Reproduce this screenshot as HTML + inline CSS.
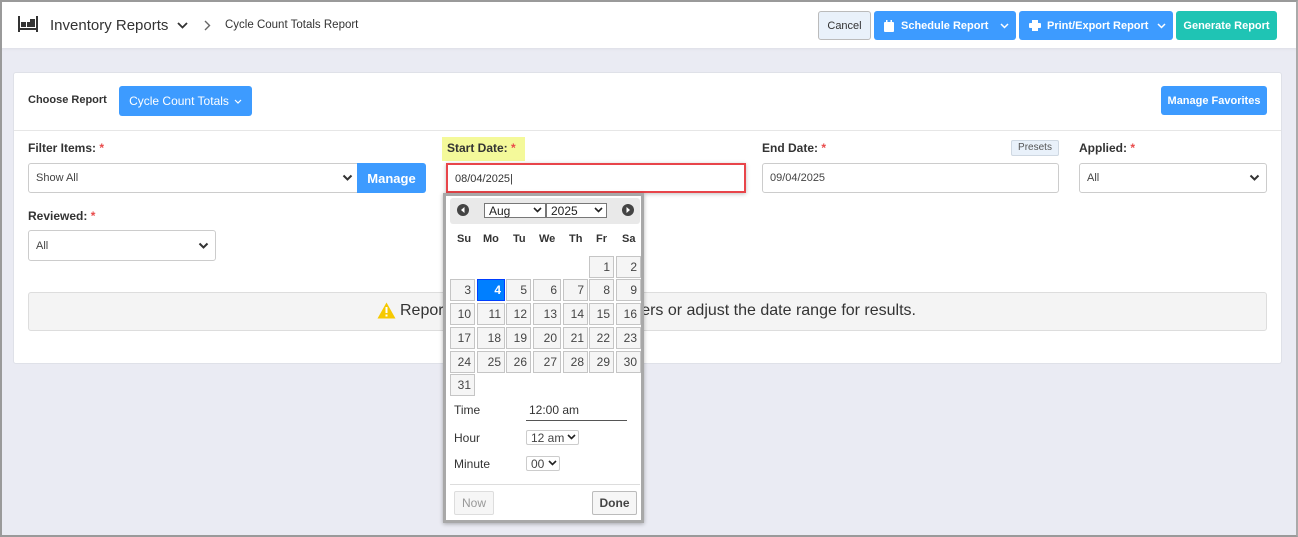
<!DOCTYPE html>
<html><head><style>
*{box-sizing:border-box;margin:0;padding:0}
body{width:1298px;height:537px;overflow:hidden;font-family:"Liberation Sans",Arial,sans-serif;background:#eaebf3;position:relative;color:#333}
div{white-space:nowrap}
.frame{position:absolute;inset:0;border:2px solid #9a9a9a;border-right-color:#aaa;pointer-events:none;z-index:50}
.hdr{position:absolute;left:0;top:0;width:1298px;height:48px;background:#fff;box-shadow:0 1px 3px rgba(0,0,0,.06)}
.abs{position:absolute}
.btn{position:absolute;border-radius:3px;color:#fff;font-size:11px;font-weight:bold;display:flex;align-items:center;justify-content:center}
.blue{background:#3d9bff}
.card{position:absolute;left:13px;top:72px;width:1269px;height:292px;background:#fff;border:1px solid #dfe1e8;border-radius:3px}
.lbl{position:absolute;font-size:12px;font-weight:bold;color:#333}
.req{color:#e94b4b}
.sel{position:absolute;border:1px solid #ccc;border-radius:3px;background:#fff;font-size:11px;color:#444;padding-left:7px;display:flex;align-items:center}
.chev{position:absolute;right:6px;top:50%;margin-top:-4px}
.cell{position:absolute;background:#f5f5f5;border:1px solid #c5c5c5;font-size:12px;color:#454545;text-align:right;padding-right:3px;line-height:20px;height:22px}
.dh{position:absolute;font-size:11px;font-weight:bold;color:#333;top:233px}
</style></head><body>
<div class="hdr">
 <svg class="abs" style="left:18px;top:16px" width="20" height="16" viewBox="0 0 20 16"><rect x="0" y="0" width="2" height="16" fill="#333"/><rect x="18" y="0" width="2" height="16" fill="#333"/><rect x="0" y="12" width="20" height="2" fill="#333"/><rect x="3" y="6" width="5" height="5" fill="#333"/><rect x="9" y="6" width="3" height="5" fill="#333"/><rect x="12" y="3" width="5" height="8" fill="#333"/></svg>
 <div class="abs" style="left:50px;top:17px;font-size:15px;color:#333">Inventory Reports</div>
 <svg class="abs" style="left:177px;top:22px" width="11" height="7" viewBox="0 0 11 7"><path d="M1 1l4.5 4.5L10 1" stroke="#333" stroke-width="1.8" fill="none"/></svg>
 <svg class="abs" style="left:204px;top:20px" width="7" height="11" viewBox="0 0 7 11"><path d="M1 1l4.5 4.5L1 10" stroke="#666" stroke-width="1.4" fill="none"/></svg>
 <div class="abs" style="left:225px;top:19px;font-size:11.5px;color:#333">Cycle Count Totals Report</div>
 <div class="btn" style="left:818px;top:11px;width:53px;height:29px;background:#e9f1fa;border:1px solid #bbb;color:#333;font-weight:normal">Cancel</div>
 <div class="btn blue" style="left:874px;top:11px;width:142px;height:29px;justify-content:flex-start;padding-left:10px">
  <svg width="10" height="12" viewBox="0 0 10 12" style="margin-right:7px"><rect x="0" y="2" width="10" height="10" rx="1" fill="#fff"/><rect x="2" y="0" width="1.5" height="3" fill="#fff"/><rect x="6.5" y="0" width="1.5" height="3" fill="#fff"/></svg>Schedule Report
  <svg class="abs" style="left:126px;top:12px" width="9" height="6" viewBox="0 0 9 6"><path d="M1 1l3.5 3.5L8 1" stroke="#fff" stroke-width="1.5" fill="none"/></svg></div>
 <div class="btn blue" style="left:1019px;top:11px;width:154px;height:29px;justify-content:flex-start;padding-left:10px">
  <svg width="12" height="11" viewBox="0 0 12 11" style="margin-right:6px"><rect x="3" y="0" width="6" height="3" fill="#fff"/><rect x="0" y="3" width="12" height="5" rx="1" fill="#fff"/><rect x="3" y="7" width="6" height="4" fill="#fff"/></svg>Print/Export Report
  <svg class="abs" style="left:138px;top:12px" width="9" height="6" viewBox="0 0 9 6"><path d="M1 1l3.5 3.5L8 1" stroke="#fff" stroke-width="1.5" fill="none"/></svg></div>
 <div class="btn" style="left:1176px;top:11px;width:101px;height:29px;background:#1fc4b4">Generate Report</div>
</div>

<div class="card">
 <div class="lbl" style="left:14px;top:21px;font-size:11px">Choose Report</div>
 <div class="btn blue" style="left:105px;top:13px;width:133px;height:30px;font-weight:normal;font-size:12px">Cycle Count Totals
  <svg width="8" height="5" viewBox="0 0 8 5" style="margin-left:5px"><path d="M1 1l3 3 3-3" stroke="#fff" stroke-width="1.2" fill="none"/></svg></div>
 <div class="btn blue" style="left:1147px;top:13px;width:106px;height:29px;font-size:11px">Manage Favorites</div>
 <div class="abs" style="left:0;top:57px;width:1267px;height:1px;background:#e6e6e6"></div>
</div>

<div class="lbl" style="left:28px;top:141px">Filter Items: <span class="req">*</span></div>
<div class="sel" style="left:28px;top:163px;width:332px;height:30px">Show All<svg class="chev" width="11" height="8" viewBox="0 0 11 8"><path d="M1.5 1.5l4 4 4-4" stroke="#333" stroke-width="2" fill="none"/></svg></div>
<div class="btn blue" style="left:357px;top:163px;width:69px;height:30px;font-size:13px;border-radius:0 3px 3px 0">Manage</div>

<div class="lbl" style="left:28px;top:209px">Reviewed: <span class="req">*</span></div>
<div class="sel" style="left:28px;top:230px;width:188px;height:31px">All<svg class="chev" width="11" height="8" viewBox="0 0 11 8"><path d="M1.5 1.5l4 4 4-4" stroke="#333" stroke-width="2" fill="none"/></svg></div>

<div class="abs" style="left:442px;top:137px;width:83px;height:24px;background:#f4f99a"></div>
<div class="lbl" style="left:447px;top:141px">Start Date: <span class="req">*</span></div>
<div class="abs" style="left:446px;top:163px;width:300px;height:30px;border:2px solid #e8454a;background:#fff;font-size:11px;color:#333;padding:8px 0 0 7px;box-shadow:0 1px 4px rgba(0,0,0,.25)">08/04/2025|</div>

<div class="lbl" style="left:762px;top:141px">End Date: <span class="req">*</span></div>
<div class="abs" style="left:1011px;top:140px;width:48px;height:16px;background:#e9f1fa;border:1px solid #cfd8e2;border-radius:2px;font-size:10px;color:#555;text-align:center;line-height:14px">Presets</div>
<div class="sel" style="left:762px;top:163px;width:297px;height:30px">09/04/2025</div>
<div class="lbl" style="left:1079px;top:141px">Applied: <span class="req">*</span></div>
<div class="sel" style="left:1079px;top:163px;width:188px;height:30px">All<svg class="chev" width="11" height="8" viewBox="0 0 11 8"><path d="M1.5 1.5l4 4 4-4" stroke="#333" stroke-width="2" fill="none"/></svg></div>

<div class="abs" style="left:28px;top:292px;width:1239px;height:39px;background:#f4f4f4;border:1px solid #ddd;border-radius:3px"></div>
<svg class="abs" style="left:377px;top:302px" width="19" height="17" viewBox="0 0 19 17"><path d="M9.5 0.5L18.5 16.5H0.5Z" fill="#f6c900"/><rect x="8.5" y="5" width="2" height="6" fill="#fff"/><rect x="8.5" y="12.5" width="2" height="2" fill="#fff"/></svg>
<div class="abs" style="left:400px;top:302px;font-size:16px;color:#333">Report</div>
<div class="abs" style="right:382px;top:302px;font-size:16px;color:#333">filters or adjust the date range for results.</div>

<!-- datepicker -->
<div class="abs" style="left:443px;top:193px;width:201px;height:330px;background:#fff;border:3px solid #a8a8a8;box-shadow:0 1px 4px rgba(0,0,0,.3);overflow:hidden;z-index:5">
</div>
<div class="abs" style="left:450px;top:198px;width:190px;height:26px;background:#e9e9e9;border-radius:3px;z-index:6"></div>
<svg class="abs" style="left:457px;top:204px;z-index:7" width="12" height="12" viewBox="0 0 12 12"><circle cx="6" cy="6" r="6" fill="#444"/><path d="M7.5 3L4 6l3.5 3z" fill="#fff"/></svg>
<svg class="abs" style="left:622px;top:204px;z-index:7" width="12" height="12" viewBox="0 0 12 12"><circle cx="6" cy="6" r="6" fill="#444"/><path d="M4.5 3L8 6l-3.5 3z" fill="#fff"/></svg>
<div class="sel" style="left:484px;top:203px;width:62px;height:15px;border-radius:0;border-color:#777;font-size:12px;padding-left:4px;z-index:7;color:#222">Aug<svg class="chev" style="right:3px" width="9" height="6" viewBox="0 0 9 6"><path d="M1 1l3.5 3.5L8 1" stroke="#222" stroke-width="1.6" fill="none"/></svg></div>
<div class="sel" style="left:546px;top:203px;width:61px;height:15px;border-radius:0;border-color:#777;font-size:12px;padding-left:4px;z-index:7;color:#222">2025<svg class="chev" style="right:3px" width="9" height="6" viewBox="0 0 9 6"><path d="M1 1l3.5 3.5L8 1" stroke="#222" stroke-width="1.6" fill="none"/></svg></div>
<div style="position:absolute;left:0;top:0;z-index:8">
<div class="dh" style="left:457px">Su</div><div class="dh" style="left:483px">Mo</div><div class="dh" style="left:513px">Tu</div><div class="dh" style="left:539px">We</div><div class="dh" style="left:569px">Th</div><div class="dh" style="left:596px">Fr</div><div class="dh" style="left:622px">Sa</div>
<div id="cells"></div>
<div class="abs" style="left:454px;top:403px;font-size:12px">Time</div>
<div class="abs" style="left:529px;top:403px;font-size:12px">12:00 am</div>
<div class="abs" style="left:526px;top:420px;width:101px;height:1px;background:#555"></div>
<div class="abs" style="left:454px;top:431px;font-size:12px">Hour</div>
<div class="sel" style="left:526px;top:430px;width:53px;height:15px;font-size:12px;padding-left:4px;border-radius:2px">12 am<svg class="chev" style="right:2px" width="9" height="6" viewBox="0 0 9 6"><path d="M1 1l3.5 3.5L8 1" stroke="#222" stroke-width="1.6" fill="none"/></svg></div>
<div class="abs" style="left:454px;top:457px;font-size:12px">Minute</div>
<div class="sel" style="left:526px;top:456px;width:34px;height:15px;font-size:12px;padding-left:4px;border-radius:2px">00<svg class="chev" style="right:2px" width="9" height="6" viewBox="0 0 9 6"><path d="M1 1l3.5 3.5L8 1" stroke="#222" stroke-width="1.6" fill="none"/></svg></div>
<div class="abs" style="left:450px;top:484px;width:190px;height:1px;background:#ddd"></div>
<div class="abs" style="left:454px;top:491px;width:40px;height:24px;border:1px solid #ddd;background:#f6f6f6;font-size:12px;color:#999;text-align:center;line-height:22px;border-radius:2px">Now</div>
<div class="abs" style="left:592px;top:491px;width:45px;height:24px;border:1px solid #bbb;background:#f6f6f6;font-size:12px;font-weight:bold;color:#444;text-align:center;line-height:22px;border-radius:2px">Done</div>
</div>
<script>
var cols=[[450,25],[477,28],[506,25],[533,28],[563,25],[589,25],[616,25]];
var rows=[256,279,303,327,351,374];
var h='';var start=5;
for(var i=0;i<31;i++){var p=start+i;var r=Math.floor(p/7),c=p%7;
var sel=(i+1==4);
h+='<div class="cell" style="left:'+cols[c][0]+'px;top:'+rows[r]+'px;width:'+cols[c][1]+'px;'+(sel?'background:#007fff;border-color:#003eff;color:#fff;font-weight:bold;':'')+'">'+(i+1)+'</div>';}
document.getElementById('cells').innerHTML=h;
</script>
<div class="frame"></div>
</body></html>
